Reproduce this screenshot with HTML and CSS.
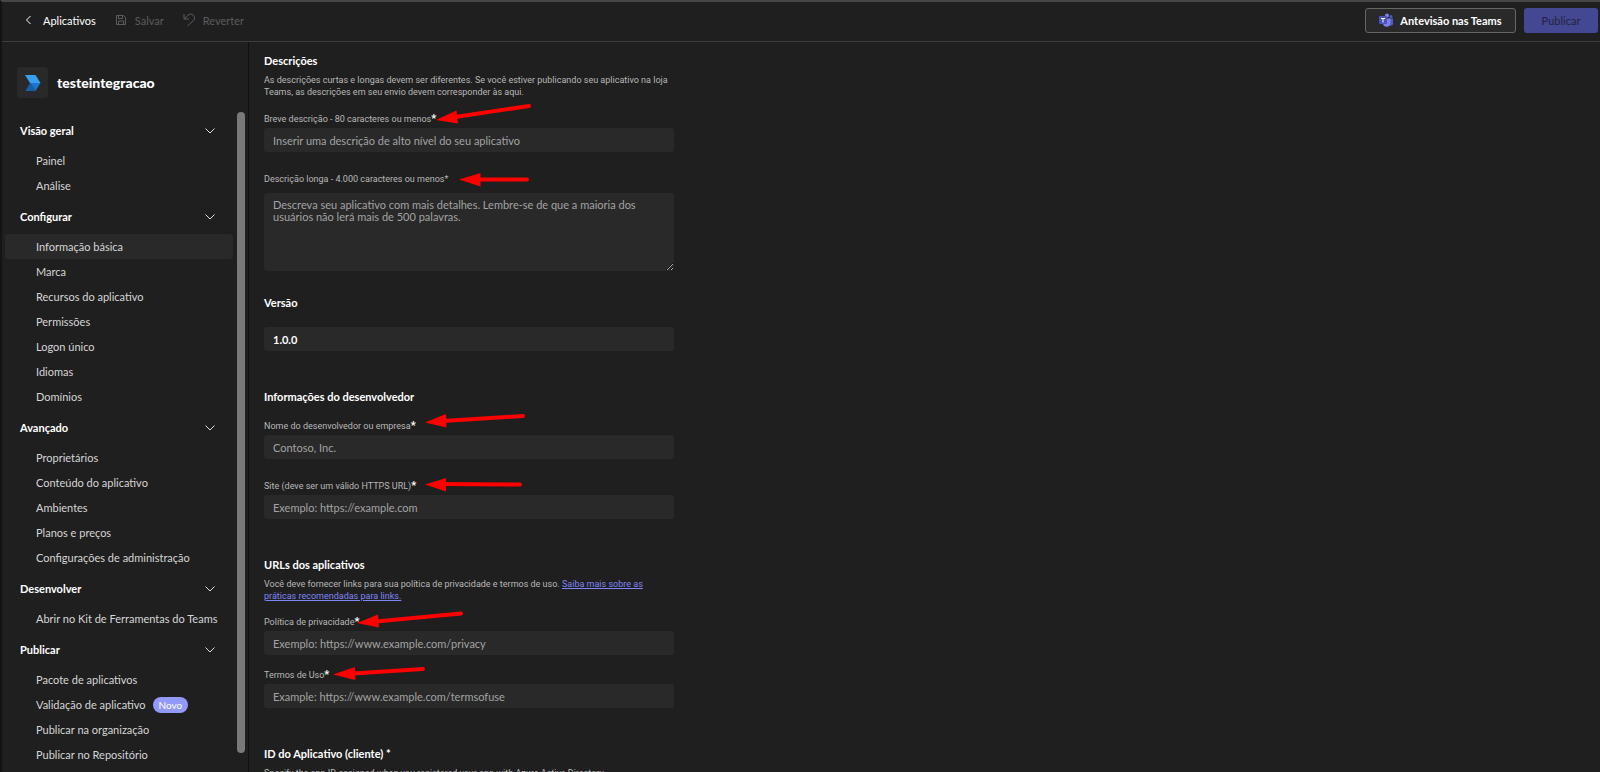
FILE: index.html
```
<!DOCTYPE html>
<html lang="pt-BR">
<head>
    <meta charset="utf-8">
    <title>testeintegracao - Informação básica</title>
    <link rel="stylesheet" href="styles.css">
</head>
<body>
    <header class="toolbar">
        <div class="toolbar-group">
            <button class="tool tool-back">
                <svg class="icon-back" viewBox="0 0 12 14"><path d="M7.500 3 3.500 7l4 4"/></svg>
                Aplicativos
            </button>
            <button class="tool" disabled>
                <svg class="icon-save" viewBox="0 0 12 14"><path d="M1.500 2.500h7l2 2v7h-9zM3.500 2.500v3h4v-3M3.500 11.500V8h5v3.500"/></svg>
                Salvar
            </button>
            <button class="tool" disabled>
                <svg class="icon-undo" viewBox="0 0 12 14"><path d="M1 1v5h5M1 6 5 2.200A3.700 3.700 0 0 1 10.500 7.500L4.500 13"/></svg>
                Reverter
            </button>
        </div>
        <div class="toolbar-actions">
            <button class="btn btn-preview">
                <svg class="icon-teams" viewBox="0 0 14 14">
                    <circle cx="12" cy="3.500" r="1.500" fill="#5059c9"/>
                    <circle cx="8" cy="2.500" r="2" fill="#7b83eb"/>
                    <path d="M10 5.500h4V10a2 2 0 0 1-4 1z" fill="#5059c9"/>
                    <path d="M4 5.500h7.500V10a3.700 3.700 0 0 1-7.500 0z" fill="#7b83eb"/>
                    <rect y="3" width="8" height="8" rx="1" fill="#4b53bc"/>
                    <path d="M2 5.500h4M4 5.500V9.500" stroke="#fff" fill="none"/>
                </svg>
                Antevisão nas Teams
            </button>
            <button class="btn btn-publish" disabled>Publicar</button>
        </div>
    </header>
    <div class="layout">
        <aside class="sidebar">
            <div class="app-title">
                <span class="app-logo">
                    <svg viewBox="0 0 16 16">
                        <path d="M0 0h10.500l5 8H5z" fill="#38a0f0"/>
                        <path d="M5 8h10.500l-5 8z" fill="#1976cf"/>
                        <path d="M5 8l5.500 8H.5z" fill="#1460a8"/>
                    </svg>
                </span>
                <h1>testeintegracao</h1>
            </div>
            <div class="nav-scroll">
                <nav class="nav">
                    <button class="nav-head">Visão geral <svg viewBox="0 0 10 6"><path d="M.5.5 5 5 9.500.5"/></svg></button>
                    <a class="nav-item" href="#">Painel</a>
                    <a class="nav-item" href="#">Análise</a>
                    <button class="nav-head">Configurar <svg viewBox="0 0 10 6"><path d="M.5.5 5 5 9.500.5"/></svg></button>
                    <a class="nav-item active" href="#">Informação básica</a>
                    <a class="nav-item" href="#">Marca</a>
                    <a class="nav-item" href="#">Recursos do aplicativo</a>
                    <a class="nav-item" href="#">Permissões</a>
                    <a class="nav-item" href="#">Logon único</a>
                    <a class="nav-item" href="#">Idiomas</a>
                    <a class="nav-item" href="#">Domínios</a>
                    <button class="nav-head">Avançado <svg viewBox="0 0 10 6"><path d="M.5.5 5 5 9.500.5"/></svg></button>
                    <a class="nav-item" href="#">Proprietários</a>
                    <a class="nav-item" href="#">Conteúdo do aplicativo</a>
                    <a class="nav-item" href="#">Ambientes</a>
                    <a class="nav-item" href="#">Planos e preços</a>
                    <a class="nav-item" href="#">Configurações de administração</a>
                    <button class="nav-head">Desenvolver <svg viewBox="0 0 10 6"><path d="M.5.5 5 5 9.500.5"/></svg></button>
                    <a class="nav-item" href="#">Abrir no Kit de Ferramentas do Teams</a>
                    <button class="nav-head">Publicar <svg viewBox="0 0 10 6"><path d="M.5.5 5 5 9.500.5"/></svg></button>
                    <a class="nav-item" href="#">Pacote de aplicativos</a>
                    <a class="nav-item" href="#">Validação de aplicativo <span class="badge">Novo</span></a>
                    <a class="nav-item" href="#">Publicar na organização</a>
                    <a class="nav-item" href="#">Publicar no Repositório</a>
                </nav>
                <div class="scrollbar"></div>
            </div>
        </aside>
        <main class="content">
            <form class="form">
                <section>
                    <h2>Descrições</h2>
                    <p>As descrições curtas e longas devem ser diferentes. Se você estiver publicando seu aplicativo na loja Teams, as descrições em seu envio devem corresponder às aqui.</p>
                    <div class="field">
                        <label for="short">Breve descrição - 80 caracteres ou menos<b>*</b></label>
                        <input id="short" type="text" placeholder="Inserir uma descrição de alto nível do seu aplicativo">
                    </div>
                    <div class="field field-long">
                        <label for="long">Descrição longa - 4.000 caracteres ou menos*</label>
                        <textarea id="long" placeholder="Descreva seu aplicativo com mais detalhes. Lembre-se de que a maioria dos usuários não lerá mais de 500 palavras."></textarea>
                    </div>
                </section>
                <section class="section-version">
                    <h2><label for="version">Versão</label></h2>
                    <input id="version" type="text" value="1.0.0">
                </section>
                <section>
                    <h2>Informações do desenvolvedor</h2>
                    <div class="field">
                        <label for="company">Nome do desenvolvedor ou empresa<b>*</b></label>
                        <input id="company" type="text" placeholder="Contoso, Inc.">
                    </div>
                    <div class="field">
                        <label for="site">Site (deve ser um válido HTTPS URL)<b>*</b></label>
                        <input id="site" type="text" placeholder="Exemplo: https://example.com">
                    </div>
                </section>
                <section class="section-urls">
                    <h2>URLs dos aplicativos</h2>
                    <p>Você deve fornecer links para sua política de privacidade e termos de uso. <a href="#">Saiba mais sobre as práticas recomendadas para links.</a></p>
                    <div class="field">
                        <label for="privacy">Política de privacidade<b>*</b></label>
                        <input id="privacy" type="text" placeholder="Exemplo: https://www.example.com/privacy">
                    </div>
                    <div class="field">
                        <label for="terms">Termos de Uso<b>*</b></label>
                        <input id="terms" type="text" placeholder="Example: https://www.example.com/termsofuse">
                    </div>
                </section>
                <section>
                    <h2>ID do Aplicativo (cliente) *</h2>
                    <p>Specify the app ID assigned when you registered your app with Azure Active Directory.</p>
                </section>
            </form>
        </main>
    </div>
    <!-- Arrows drawn over the required fields -->
    <svg class="arrows" viewBox="0 0 1600 772">
        <g stroke="#f00" stroke-width="4" stroke-linecap="round">
            <path d="M529 106 455 117M527 179.500H478M523 416 443 421M520 484.500 443 484M461 613.500 376 621.500M423 669 353 673.500"/>
        </g>
        <g fill="#f00">
            <path d="M436 120 456.500 110.500 458 123.500zM459 179.500 480.500 173V186.500zM425 422.500 446 414 446.500 427.500zM425 484.500 446 478V491.500zM357 623 378 614.500 379 627.500zM333 674.500 355 667 355.500 680z"/>
        </g>
    </svg>
</body>
</html>
```

FILE: styles.css
```
* {
    box-sizing: border-box;
}
body {
    margin: 0;
    height: 100vh;
    overflow: hidden;
    display: flex;
    flex-direction: column;
    background: #1f1f1f;
    border-top: 2px solid #464646;
    border-left: 2px solid #141414;
    color: #fff;
    font-family: "Segoe UI", Lato, sans-serif;
    font-size: 11px;
}
button, input, textarea {
    font: inherit;
    color: inherit;
    border: none;
    background: none;
    padding: 0;
}
svg {
    display: block;
    fill: none;
    stroke-linejoin: round;
}
.toolbar {
    flex: none;
    display: flex;
    justify-content: space-between;
    align-items: center;
    height: 40px;
    padding: 0 2px 3px 21px;
    border-bottom: 1px solid #3d3d3d;
}
.toolbar-group {
    display: flex;
    gap: 19px;
}
.toolbar-actions {
    display: flex;
    gap: 8px;
}
.tool {
    display: flex;
    align-items: center;
    gap: 8px;
}
.tool svg {
    width: 12px;
    height: 14px;
    stroke: currentColor;
}
.tool:disabled {
    color: #5c5c5c;
}
.btn {
    display: flex;
    align-items: center;
    justify-content: center;
    gap: 7px;
    height: 25px;
    border-radius: 3px;
}
.btn-preview {
    width: 151px;
    border: 1px solid #666;
    background: #292929;
    font-weight: 700;
}
.icon-teams {
    width: 14px;
    height: 14px;
}
.btn-publish {
    width: 74px;
    background: #444791;
    color: #23243f;
}
.layout {
    flex: 1;
    min-height: 0;
    display: flex;
}
.sidebar {
    flex: none;
    width: 247px;
    display: flex;
    flex-direction: column;
    padding: 25px 3px 19px 3px;
    border-right: 1px solid #111;
}
.app-title {
    display: flex;
    align-items: center;
    gap: 9px;
    padding-left: 12px;
}
.app-title h1 {
    margin: 0;
    font-size: 14px;
    font-weight: 900;
}
.app-logo {
    display: flex;
    align-items: center;
    justify-content: center;
    width: 31px;
    height: 31px;
    border-radius: 3px;
    background: #292929;
}
.app-logo svg {
    width: 16px;
    height: 16px;
}
.nav-scroll {
    flex: 1;
    min-height: 0;
    display: flex;
    justify-content: space-between;
    margin-top: 14px;
}
.nav {
    flex: none;
    width: 228px;
    display: flex;
    flex-direction: column;
}
.nav-head {
    flex: none;
    display: flex;
    align-items: center;
    justify-content: space-between;
    height: 25px;
    margin: 6px 0 5px;
    padding: 0 18px 0 15px;
    font-weight: 700;
}
.nav-head svg {
    width: 10px;
    height: 6px;
    stroke: #ddd;
}
.nav-item {
    flex: none;
    display: flex;
    align-items: center;
    gap: 7px;
    height: 25px;
    padding-left: 31px;
    border-radius: 3px;
    color: #d6d6d6;
    text-decoration: none;
    white-space: nowrap;
}
.nav-item.active {
    background: #292929;
}
.badge {
    padding: 0 6px;
    border-radius: 8px;
    background: #9299f7;
    color: #fff;
    font-size: 10px;
    line-height: 16px;
}
.scrollbar {
    width: 8px;
    border-radius: 4px;
    background: #797979;
}
.content {
    flex: 1;
    min-width: 0;
    overflow: hidden;
    padding: 11px 15px 0;
}
.form {
    max-width: 410px;
}
section {
    margin-bottom: 38px;
}
h2 {
    margin: 0;
    font-size: 11px;
    line-height: 16px;
    font-weight: 700;
}
p {
    margin: 5px 0 0;
    color: #b8b8b8;
    font-family: "Segoe UI", Roboto, sans-serif;
    font-size: 9px;
    line-height: 12px;
}
p a {
    color: #7f85f5;
}
.field {
    margin-top: 19px;
}
h2 + .field, p + .field {
    margin-top: 13px;
}
.field label {
    display: block;
    margin-bottom: 1px;
    color: #b8b8b8;
    font-family: "Segoe UI", Roboto, sans-serif;
    font-size: 9px;
    line-height: 16px;
}
.field b {
    color: #fff;
    font-size: 11px;
    line-height: 12px;
}
input, textarea {
    display: block;
    width: 100%;
    height: 24px;
    padding: 0 9px;
    border-radius: 3px;
    background: #292929;
}
textarea {
    height: 78px;
    padding-top: 6px;
    line-height: 12px;
}
::placeholder {
    color: #a3a3a3;
    opacity: 1;
}
.field-long label {
    margin-bottom: 6px;
}
section:has(.field-long) {
    margin-bottom: 24px;
}
.section-version input {
    margin-top: 16px;
    font-weight: 700;
}
.section-urls .field {
    margin-top: 12px;
}
.arrows {
    position: absolute;
    top: 0;
    left: 0;
    width: 1600px;
    height: 772px;
    pointer-events: none;
}
```
